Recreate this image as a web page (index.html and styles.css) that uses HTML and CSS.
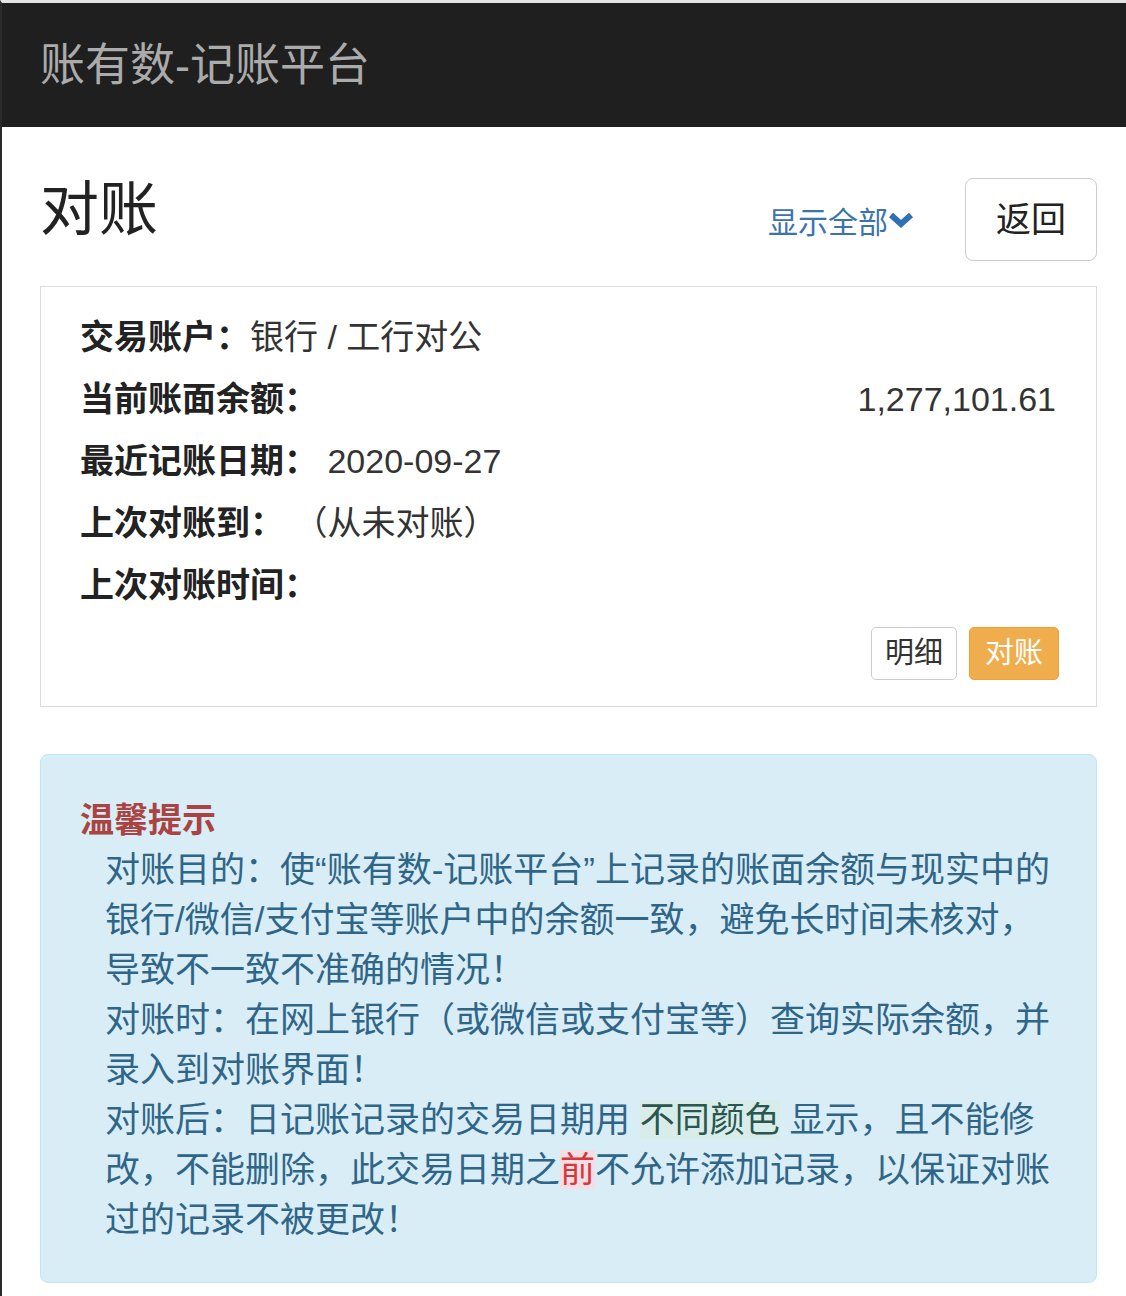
FILE: index.html
```html
<!DOCTYPE html>
<html lang="zh-CN">

<head>
    <meta charset="UTF-8">
    <meta name="viewport" content="width=device-width, initial-scale=1.0">
    <title>对账 - 账有数-记账平台</title>
    <link rel="stylesheet" href="styles.css">
</head>

<body>
    <nav class="navbar">
        <a class="navbar-brand" href="#">账有数-记账平台</a>
    </nav>

    <div class="container">
        <div class="page-header">
            <h1>对账</h1>
            <a class="toggle-all" href="#">显示全部<svg class="chevron" viewBox="0 0 26 18" width="26" height="18">
                    <path d="M3 4 L13 13 L23 4" />
                </svg></a>
            <button class="btn btn-default btn-back" type="button">返回</button>
        </div>

        <div class="panel">
            <div class="info-row"><b>交易账户：</b>银行 / 工行对公</div>
            <div class="info-row info-balance"><b>当前账面余额：</b><span>1,277,101.61</span></div>
            <div class="info-row"><b>最近记账日期：</b> 2020-09-27</div>
            <div class="info-row"><b>上次对账到：</b> （从未对账）</div>
            <div class="info-row"><b>上次对账时间：</b></div>
            <div class="panel-actions">
                <button class="btn btn-default btn-xs" type="button">明细</button>
                <button class="btn btn-warning btn-xs" type="button">对账</button>
            </div>
        </div>

        <div class="alert alert-info">
            <h4>温馨提示</h4>
            <p>对账目的：使“账有数-记账平台”上记录的账面余额与现实中的<br>银行/微信/支付宝等账户中的余额一致，避免长时间未核对，<br>导致不一致不准确的情况！</p>
            <p>对账时：在网上银行（或微信或支付宝等）查询实际余额，并<br>录入到对账界面！</p>
            <p>对账后：日记账记录的交易日期用 <span class="mark-color">不同颜色</span> 显示，且不能修<br>改，不能删除，此交易日期之<span class="mark-danger">前</span>不允许添加记录，以保证对账<br>过的记录不被更改！</p>
        </div>
    </div>
</body>

</html>
```

FILE: styles.css
```css
body {
    font-family: "Liberation Sans", "Noto Sans CJK SC", sans-serif;
    font-size: 34px;
    color: #333;
    margin: 0;
    padding: 0;
    background: #fff;
    border-top: 3px solid #e4e4e4;
    border-left: 2px solid #2b2b2b;
    min-height: 1293px;
}

a {
    text-decoration: none;
}

/* top bar */
.navbar {
    height: 124px;
    background-color: #1f1f1f;
    display: flex;
    align-items: center;
    padding-left: 38px;
}

.navbar-brand {
    color: #ababab;
    font-size: 45px;
    line-height: 1;
}

.container {
    padding: 0 29px 0 38px;
}

.page-header {
    display: flex;
    align-items: center;
    margin-top: 51px;
}

.page-header h1 {
    flex: 1;
    margin: 0 0 18px 0;
    font-size: 59px;
    font-weight: normal;
    line-height: 1;
    color: #222;
}

.toggle-all {
    color: #3b73ad;
    font-size: 30px;
    display: flex;
    align-items: center;
    margin-right: 51px;
}

.chevron {
    margin-left: 0;
    fill: none;
    stroke: #2f6fb3;
    stroke-width: 6;
    stroke-linejoin: miter;
}

/* buttons */
.btn {
    font: inherit;
    border: 1px solid #ccc;
    background: #fff;
    color: #333;
    cursor: pointer;
}

.btn-back {
    font-size: 35px;
    line-height: 49px;
    padding: 16px 30px;
    border-radius: 8px;
    color: #222;
}

.btn-xs {
    font-size: 29px;
    line-height: 51px;
    padding: 0 13px;
    border-radius: 5px;
}

.btn-warning {
    background-color: #f0ad4e;
    border-color: #eea236;
    color: #fff;
    padding: 0 15px;
}

/* account summary */
.panel {
    margin-top: 25px;
    border: 1px solid #ddd;
    padding: 19px 40px 26px 39px;
}

.info-row {
    line-height: 62px;
    height: 62px;
    color: #333;
}

.info-row b {
    color: #222;
}

.info-balance {
    display: flex;
    justify-content: space-between;
}

.panel-actions {
    display: flex;
    justify-content: flex-end;
    gap: 12px;
    margin-top: 11px;
    margin-right: -3px;
}

/* tips box */
.alert {
    margin-top: 47px;
    background-color: #d9edf7;
    border: 1px solid #bce8f1;
    border-radius: 8px;
    padding: 40px 39px 37px 39px;
    color: #2f6688;
}

.alert h4 {
    margin: 0;
    font-size: 34px;
    line-height: 50px;
    color: #a94442;
}

.alert p {
    margin: 0 0 0 25px;
    font-size: 35px;
    line-height: 50px;
}

.mark-color {
    color: #2a5650;
    background-color: #d8ede9;
}

.mark-danger {
    color: #d9363a;
    background-color: #f2dfe6;
}
```
